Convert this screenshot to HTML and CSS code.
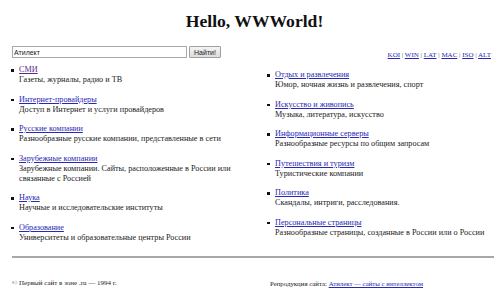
FILE: index.html
```html
<!DOCTYPE html>
<html lang="ru">
<head>
<meta charset="utf-8">
<title>Hello, WWWorld!</title>
<link rel="stylesheet" href="styles.css">
</head>
<body>
<div class="page">
  <h1 class="title">Hello, WWWorld!</h1>
  <div class="toolbar">
    <form class="search">
      <input class="search-input" type="text" value="Атилект">
      <button class="search-btn" type="button">Найти!</button>
    </form>
    <div class="langs">
      <a href="#">KOI</a> | <a href="#">WIN</a> | <a href="#">LAT</a> | <a href="#">MAC</a> | <a href="#">ISO</a> | <a href="#">ALT</a>
    </div>
  </div>
  <div class="cats">
    <ul class="cat-list cat-left">
      <li><a class="visited" href="#">СМИ</a><br>Газеты, журналы, радио и ТВ</li>
      <li><a href="#">Интернет-провайдеры</a><br>Доступ в Интернет и услуги провайдеров</li>
      <li><a href="#">Русские компании</a><br>Разнообразные русские компании, представленные в сети</li>
      <li><a href="#">Зарубежные компании</a><br>Зарубежные компании. Сайты, расположенные в России или связанные с Россией</li>
      <li><a href="#">Наука</a><br>Научные и исследовательские институты</li>
      <li><a href="#">Образование</a><br>Университеты и образовательные центры России</li>
    </ul>
    <ul class="cat-list">
      <li><a href="#">Отдых и развлечения</a><br>Юмор, ночная жизнь и развлечения, спорт</li>
      <li><a href="#">Искусство и живопись</a><br>Музыка, литература, искусство</li>
      <li><a href="#">Информационные серверы</a><br>Разнообразные ресурсы по общим запросам</li>
      <li><a href="#">Путешествия и туризм</a><br>Туристические компании</li>
      <li><a href="#">Политика</a><br>Скандалы, интриги, расследования.</li>
      <li><a href="#">Персональные страницы</a><br>Разнообразные страницы, созданные в России или о России</li>
    </ul>
  </div>
  <hr class="rule">
  <div class="footer">
    <div class="copy">© Первый сайт в зоне .ru — 1994 г.</div>
    <div class="repro">Репродукция сайта: <a href="#">Атилект — сайты с интеллектом</a></div>
  </div>
</div>
</body>
</html>
```

FILE: styles.css
```css
html, body {
  margin: 0;
  padding: 0;
  background: #fff;
}
body {
  font-family: "Liberation Serif", "Times New Roman", serif;
  color: #222;
  width: 500px;
  height: 301px;
  overflow: hidden;
}
.page {
  padding: 10px 6px 0 11px;
}
a {
  color: #2828b4;
  text-decoration: underline;
}
a.visited {
  color: #5a2a8e;
}
.title {
  margin: 0;
  font-size: 17.6px;
  line-height: 22px;
  font-weight: bold;
  text-align: center;
  color: #111;
  padding-left: 4px;
}
.toolbar {
  margin-top: 14px;
  display: flex;
  justify-content: space-between;
  align-items: flex-end;
}
.search {
  display: flex;
  gap: 2px;
  margin: 0 0 0 1px;
}
.search-input {
  box-sizing: border-box;
  width: 175px;
  height: 12px;
  margin: 0;
  padding: 0 1px;
  border: 1px solid #a9a9a9;
  font: 7px "Liberation Sans", Arial, sans-serif;
  color: #222;
  background: #fff;
}
.search-btn {
  box-sizing: border-box;
  width: 32px;
  height: 12px;
  margin: 0;
  padding: 0;
  border: 1px solid #a0a0a0;
  border-radius: 1px;
  background: linear-gradient(#f4f4f4, #dcdcdc);
  font: 7px "Liberation Sans", Arial, sans-serif;
  color: #222;
}
.langs {
  font-size: 7px;
  line-height: 9px;
  color: #555;
  margin-bottom: -2px;
  padding-right: 3px;
}
.cats {
  margin-top: 7px;
  display: grid;
  grid-template-columns: 256px 1fr;
  align-items: center;
}
.cat-list {
  list-style: none;
  margin: 0;
  padding: 0 0 0 8px;
  font-size: 8.2px;
  line-height: 10px;
}
.cat-left {
  padding-right: 20px;
}
.cat-list li {
  position: relative;
  margin-bottom: 9.5px;
}
.cat-list li:last-child {
  margin-bottom: 0;
}
.cat-list li::before {
  content: "";
  position: absolute;
  left: -8px;
  top: 4px;
  width: 2.5px;
  height: 2.5px;
  background: #111;
}
.rule {
  margin: 13px 0 0 1px;
  width: 482px;
  height: 0;
  border: 0;
  border-top: 2px solid #a8a8a8;
}
.footer {
  margin-top: 21px;
  display: grid;
  grid-template-columns: 259px 1fr;
  line-height: 9px;
}
.copy {
  font-size: 7px;
  padding-left: 1px;
}
.repro {
  font-size: 6.8px;
}
```
